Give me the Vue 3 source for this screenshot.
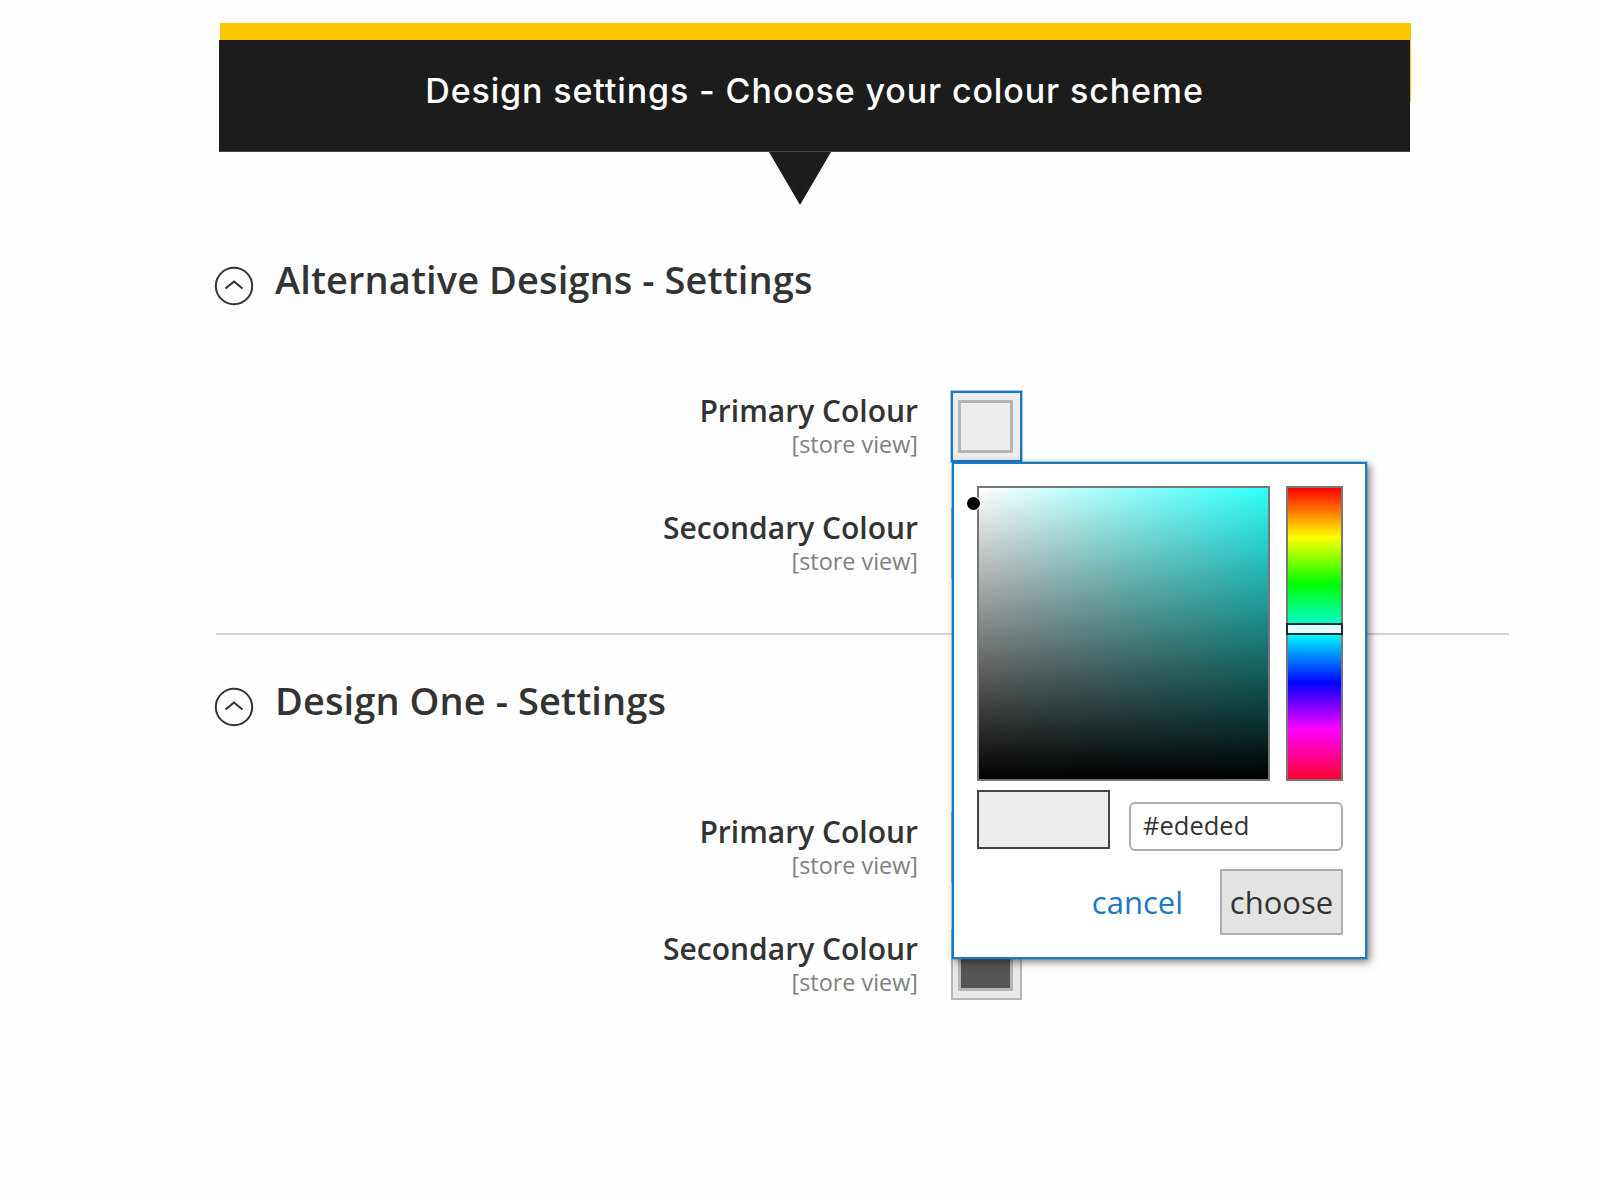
<script setup>
const sections = [
  { title: 'Alternative Designs - Settings', primary: '#ededed', secondary: '#ededed', active: true },
  { title: 'Design One - Settings', primary: '#ededed', secondary: '#555555', active: false },
]
</script>

<template>
  <div class="page">
    <header class="banner">
      <h1>Design settings - Choose your colour scheme</h1>
    </header>

    <section v-for="(s, i) in sections" :key="i" class="section" :class="{ first: i === 0 }">
      <div class="heading">
        <svg class="chevron" width="40" height="40" viewBox="0 0 40 40" aria-hidden="true">
          <circle cx="20" cy="20" r="18.2" fill="none" stroke="#333" stroke-width="2" />
          <path d="M11.5 22.5 L20 15.5 L28.5 22.5" fill="none" stroke="#333" stroke-width="2" />
        </svg>
        <h2>{{ s.title }}</h2>
      </div>
      <div class="rows">
        <div class="row">
          <div class="label"><strong>Primary Colour</strong><span>[store view]</span></div>
          <div class="swatch" :class="{ active: s.active }">
            <i :style="{ background: s.primary }"></i>
          </div>
        </div>
        <div class="row">
          <div class="label"><strong>Secondary Colour</strong><span>[store view]</span></div>
          <div class="swatch"><i :style="{ background: s.secondary }"></i></div>
        </div>
      </div>
    </section>

    <div class="picker">
      <div class="pick-top">
        <div class="field"><b class="dot"></b></div>
        <div class="hue"><b class="hue-mark"></b></div>
      </div>
      <div class="pick-mid">
        <div class="preview"></div>
        <div class="hex">#ededed</div>
      </div>
      <div class="pick-actions">
        <a class="cancel">cancel</a>
        <button class="choose" type="button">choose</button>
      </div>
    </div>
  </div>
</template>

<style>
html, body { margin: 0; background: #fff; }
</style>

<style scoped>
.page {
  position: relative;
  width: 1600px;
  height: 1200px;
  overflow: hidden;
  background: #fefefe;
  font-family: "Open Sans", sans-serif;
  color: #333;
}
.banner {
  position: relative;
  box-sizing: border-box;
  width: 1191px;
  height: 112px;
  margin: 40px 0 0 219px;
  background: #1c1c1c;
  display: flex;
  align-items: center;
  justify-content: center;
}
.banner::before {
  content: "";
  position: absolute;
  left: 1px;
  right: -1px;
  top: -17px;
  height: 79px;
  background: #fcc600;
  z-index: 0;
}
.banner::after {
  content: "";
  position: absolute;
  left: 0;
  right: 0;
  top: 0;
  bottom: 0;
  background: #1c1c1c;
  border-bottom: 1px solid #444;
  z-index: 0;
}
.banner h1 {
  position: relative;
  z-index: 2;
  margin: 0 0 10px;
  font-family: Inter, sans-serif;
  font-size: 34px;
  font-weight: 500;
  letter-spacing: 0.87px;
  color: #fff;
  line-height: 1;
}
.section.first::before {
  content: "";
  display: block;
  width: 0;
  height: 0;
  margin-left: 769px;
  border-left: 31px solid transparent;
  border-right: 31px solid transparent;
  border-top: 53px solid #1c1c1c;
}
.section.first .heading { margin-top: 53px; }
.section + .section {
  margin-top: 54px;
  margin-left: 216px;
  width: 1293px;
  border-top: 2px solid #d4d4d4;
  padding-top: 44px;
}
.section + .section .rows { margin-left: -216px; }
.section + .section .heading { margin-left: -2px; }
.heading {
  display: flex;
  align-items: flex-start;
  margin-left: 214px;
  height: 42px;
}
.chevron { margin-top: 8px; flex: none; }
.heading h2 {
  margin: 0 0 0 21px;
  font-size: 38px;
  line-height: 42px;
  font-weight: 600;
  color: #333;
  letter-spacing: 0.1px;
  white-space: nowrap;
}
.rows {
  margin-top: 91px;
  display: flex;
  flex-direction: column;
  gap: 46px;
}
.row {
  display: flex;
  align-items: flex-start;
  gap: 33px;
}
.label {
  width: 918px;
  flex: none;
  text-align: right;
  display: flex;
  flex-direction: column;
  padding-top: 1px;
}
.label strong {
  font-size: 30px;
  line-height: 38px;
  font-weight: 600;
  color: #333;
}
.label span {
  font-size: 23.4px;
  line-height: 28px;
  color: #808080;
}
.swatch {
  box-sizing: border-box;
  width: 71px;
  height: 71px;
  padding: 7px 7px 7px 5px;
  border: 2px solid #b5b5b5;
  background: #e8e8e8;
  display: flex;
}
.swatch i {
  flex: 1;
  border: 3px solid #b5b5b5;
}
.swatch.active {
  border-color: #1979c3;
  background: #ededed;
  box-shadow: 0 0 0 1px rgba(25, 121, 195, 0.4);
}
.picker {
  position: absolute;
  left: 952px;
  top: 462px;
  box-sizing: border-box;
  width: 415px;
  height: 497px;
  padding: 22px 22px 22px 23px;
  background: #fff;
  border: 2px solid #1979c3;
  box-shadow: 0 0 0 1px rgba(25, 121, 195, 0.3), 3px 3px 8px rgba(0, 0, 0, 0.5);
  display: flex;
  flex-direction: column;
}
.pick-top {
  display: flex;
  justify-content: space-between;
}
.field {
  position: relative;
  box-sizing: border-box;
  width: 293px;
  height: 295px;
  border: 2px solid #777;
  background: linear-gradient(to top, #000, rgba(0, 0, 0, 0)), linear-gradient(to right, #fff, #2ffffa);
}
.dot {
  position: absolute;
  left: -12px;
  top: 9px;
  width: 13px;
  height: 13px;
  border-radius: 50%;
  background: #000;
  box-shadow: 0 0 0 1px #fff;
}
.hue {
  position: relative;
  box-sizing: border-box;
  width: 57px;
  height: 295px;
  border: 2px solid #777;
  background: linear-gradient(to bottom, #f00 0%, #ff0 17%, #0f0 33%, #0ff 50%, #00f 67%, #f0f 83%, #f03 100%);
}
.hue-mark {
  position: absolute;
  left: -2px;
  right: -2px;
  top: 135px;
  height: 12px;
  box-sizing: border-box;
  border: 2px solid #1c2a2a;
  background: #dff;
}
.pick-mid {
  display: flex;
  justify-content: space-between;
  align-items: flex-start;
  margin-top: 9px;
}
.preview {
  box-sizing: border-box;
  width: 133px;
  height: 59px;
  border: 2px solid #444;
  background: #ededed;
}
.hex {
  box-sizing: border-box;
  width: 214px;
  height: 49px;
  margin-top: 12px;
  padding-left: 12px;
  border: 2px solid #adadad;
  border-radius: 6px;
  background: #fff;
  font-family: "Open Sans", sans-serif;
  font-size: 25.5px;
  line-height: 43px;
  color: #333;
}
.pick-actions {
  display: flex;
  justify-content: flex-end;
  align-items: center;
  margin-top: 18px;
  gap: 37px;
}
.cancel {
  font-family: "Open Sans", sans-serif;
  font-size: 31px;
  color: #1979c3;
}
.choose {
  box-sizing: border-box;
  width: 123px;
  height: 66px;
  padding: 0;
  border: 2px solid #adadad;
  border-radius: 0;
  background: #e3e3e3;
  font-family: "Open Sans", sans-serif;
  font-size: 31px;
  color: #333;
}
</style>
